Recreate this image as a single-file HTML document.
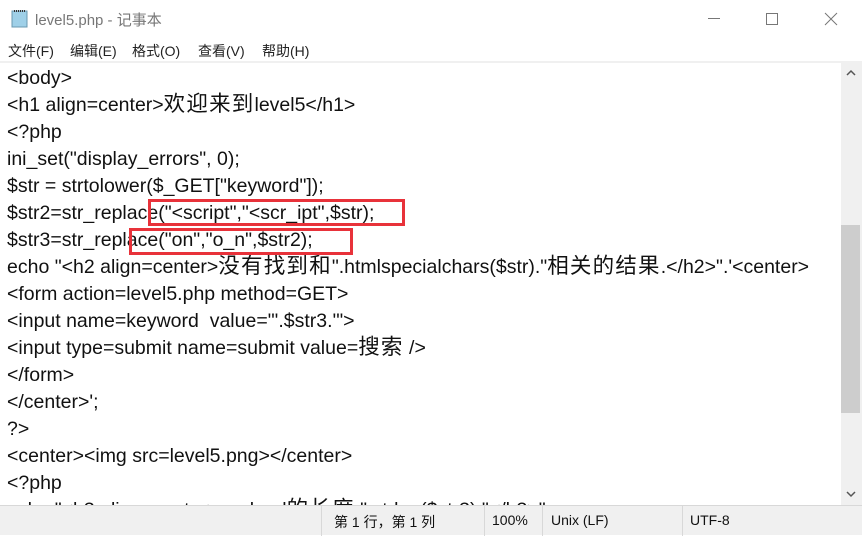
<!DOCTYPE html>
<html><head><meta charset="utf-8"><style>
*{margin:0;padding:0;box-sizing:border-box}
body{width:862px;height:535px;overflow:hidden;background:#fff;font-family:"Liberation Sans","Noto Sans CJK SC",sans-serif;position:relative}
.title{position:absolute;left:0;top:0;width:862px;height:38px;background:#fff}
.title .t{position:absolute;left:35px;top:9px;font-size:15px;color:#777}
.menu{position:absolute;left:0;top:38px;width:862px;height:24px;font-size:14px;color:#222}
.menu span{position:absolute;top:3px}
.sep{position:absolute;left:0;top:61px;width:862px;height:2px;background:#f0f0f0}
.code{position:absolute;left:7px;top:65px;font-size:19.5px;line-height:27px;color:#111;white-space:pre}
.c{font-size:21.5px;letter-spacing:1.2px;line-height:10px}
.sb{position:absolute;left:841px;top:63px;width:21px;height:442px;background:#f0f0f0}
.thumb{position:absolute;left:841px;top:225px;width:19px;height:188px;background:#cdcdcd}
.status{position:absolute;left:0;top:505px;width:862px;height:30px;background:#f0f0f0;border-top:1px solid #d8d8d8;font-size:14px;color:#111}
.status span{position:absolute;top:6px}
.status i{position:absolute;top:0;width:1px;height:30px;background:#d8d8d8}
.box{position:absolute;border:3px solid #e8323a}
</style></head><body>
<div class="title">
<svg style="position:absolute;left:11px;top:9px" width="17" height="19"><rect x="1" y="2" width="15" height="16" fill="#9fd0e8" stroke="#6a98b0"/><line x1="3" y1="2" x2="14" y2="2" stroke="#333" stroke-dasharray="1 1" stroke-width="2"/></svg>
<div class="t">level5.php - 记事本</div>
<svg style="position:absolute;left:700px;top:12px" width="150" height="16"><line x1="8" y1="6.5" x2="20" y2="6.5" stroke="#777"/><rect x="66.5" y="1.5" width="11" height="11" fill="none" stroke="#777"/><path d="M125 1L137 13M137 1L125 13" stroke="#777"/></svg>
</div>
<div class="menu"><span style="left:8px">文件(F)</span><span style="left:70px">编辑(E)</span><span style="left:132px">格式(O)</span><span style="left:198px">查看(V)</span><span style="left:262px">帮助(H)</span></div>
<div class="sep"></div>
<div class="code">&lt;body&gt;
&lt;h1 align=center&gt;<span class="c">欢迎来到</span>level5&lt;/h1&gt;
&lt;?php
ini_set("display_errors", 0);
$str = strtolower($_GET["keyword"]);
$str2=str_replace("&lt;script","&lt;scr_ipt",$str);
$str3=str_replace("on","o_n",$str2);
echo "&lt;h2 align=center&gt;<span class="c">没有找到和</span>".htmlspecialchars($str)."<span class="c">相关的结果</span>.&lt;/h2&gt;".'&lt;center&gt;
&lt;form action=level5.php method=GET&gt;
&lt;input name=keyword  value="'.$str3.'"&gt;
&lt;input type=submit name=submit value=<span class="c">搜索</span> /&gt;
&lt;/form&gt;
&lt;/center&gt;';
?&gt;
&lt;center&gt;&lt;img src=level5.png&gt;&lt;/center&gt;
&lt;?php
echo "&lt;h3 align=center&gt;payload<span class="c">的长度</span>:".strlen($str3)."&lt;/h3&gt;";</div>
<div class="box" style="left:148px;top:199px;width:257px;height:27px"></div>
<div class="box" style="left:129px;top:228px;width:224px;height:27px"></div>
<div class="sb"></div><div class="thumb"></div>
<svg style="position:absolute;left:844px;top:66px" width="14" height="14"><path d="M3 9L7 5L11 9" fill="none" stroke="#555" stroke-width="1.5"/></svg>
<svg style="position:absolute;left:844px;top:487px" width="14" height="14"><path d="M3 5L7 9L11 5" fill="none" stroke="#555" stroke-width="1.5"/></svg>
<div class="status">
<i style="left:321px"></i><span style="left:334px">第 1 行，第 1 列</span>
<i style="left:484px"></i><span style="left:492px">100%</span>
<i style="left:542px"></i><span style="left:551px">Unix (LF)</span>
<i style="left:682px"></i><span style="left:690px">UTF-8</span>
</div>
</body></html>
